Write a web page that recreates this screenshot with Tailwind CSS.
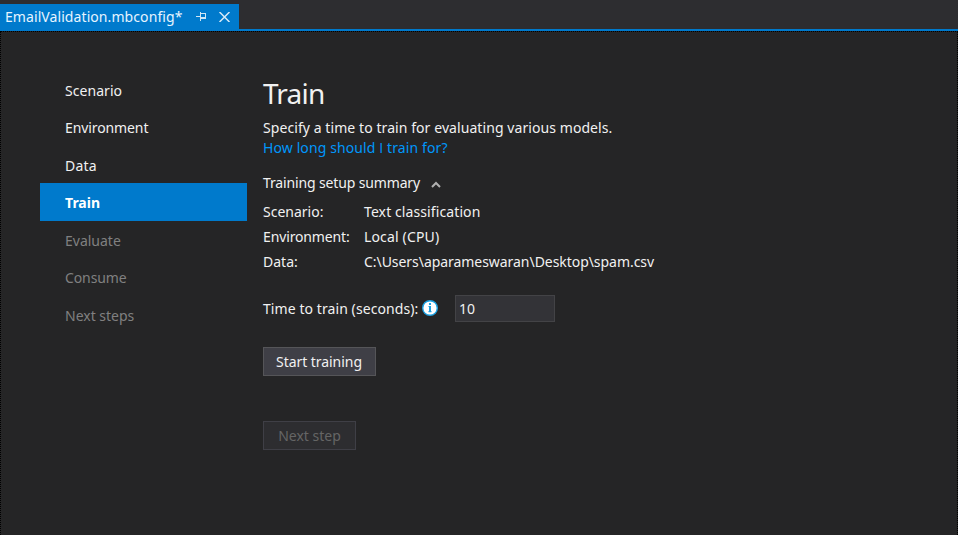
<!DOCTYPE html>
<html lang="en">
<head>
<meta charset="utf-8">
<title>EmailValidation.mbconfig</title>
<script src="https://cdn.jsdelivr.net/npm/@tailwindcss/browser@4"></script>
</head>
<body class="w-[958px] h-[535px] overflow-hidden flex flex-col bg-[#252526] text-[#f1f1f1] font-['Noto_Sans',sans-serif] text-[14px] leading-5 whitespace-nowrap">
<header class="h-[31px] shrink-0 bg-[#2d2d30] border-b-2 border-[#007acc] flex items-end">
  <div class="h-[25px] w-[239px] bg-[#007acc] flex items-center pl-[5px]">
    <span class="w-[191px] text-[#e6f4ff] pt-px tracking-[0.08px]">EmailValidation.mbconfig*</span>
    <svg class="w-[11px] h-[9px] shrink-0" viewBox="0 0 11 9" fill="#d0e6f5" shape-rendering="crispEdges"><path d="M0 4h4v1H0zM4 0h1v9H4zM5 1h5v1H5zM9 2h1v5H9zM5 5h5v2H5z"/></svg>
    <svg class="w-[11px] h-[10px] mt-px ml-[12px] shrink-0" viewBox="0 0 11 10" fill="none" stroke="#d8ebf8" stroke-width="1.500"><path d="M.5 0L10.500 10M10.500 0L.5 10"/></svg>
  </div>
</header>
<div class="flex-1 flex border-t border-x border-dotted border-black">
  <nav class="ml-[39px] mt-[38px] w-[207px] shrink-0">
    <div class="h-[37.5px] pl-[25px] pt-[4px] flex items-center tracking-[0.05px]">Scenario</div>
    <div class="h-[37.5px] pl-[25px] pt-[3px] flex items-center tracking-[-0.1px]">Environment</div>
    <div class="h-[37.5px] pl-[25px] pt-[4px] flex items-center tracking-[0.2px]">Data</div>
    <div class="h-[38px] pl-[25px] pt-[2px] flex items-center bg-[#007acc] text-white font-bold">Train</div>
    <div class="h-[37.5px] pl-[25px] pt-[3px] flex items-center text-[#808080]">Evaluate</div>
    <div class="h-[37.5px] pl-[25px] pt-[2px] flex items-center text-[#808080] tracking-[-0.1px]">Consume</div>
    <div class="h-[37.5px] pl-[25px] pt-[3px] flex items-center text-[#808080]">Next steps</div>
  </nav>
  <main class="ml-[16px] mt-[41px]">
    <h1 class="h-[45px] text-[28px] leading-[40px] tracking-[-0.8px]">Train</h1>
    <p class="h-5 tracking-[0.075px]">Specify a time to train for evaluating various models.</p>
    <p class="h-5 text-[#0097fb] tracking-[0.11px]">How long should <span class="font-['Open_Sans']">I</span> train for?</p>
    <div class="mt-[15px] h-5 flex"><span class="w-[157px] tracking-[-0.14px]">Training setup summary</span>
      <svg class="w-[10px] h-[7px] ml-[11px] mt-[8px]" viewBox="0 0 10 7" fill="none" stroke="#b0b0b0" stroke-width="2"><path d="M1 6L5 2L9 6"/></svg></div>
    <dl class="mt-[6px] grid grid-cols-[101px_auto] auto-rows-[25px] items-center">
      <dt>Scenario:</dt><dd class="tracking-[0.1px]">Text classification</dd>
      <dt class="tracking-[-0.13px]">Environment:</dt><dd class="tracking-[0.15px]">Local (CPU)</dd>
      <dt>Data:</dt><dd class="tracking-[-0.05px]">C:\Users\aparameswaran\Desktop\spam.csv</dd>
    </dl>
    <div class="mt-[21px] h-[27px] flex items-center">
      <span class="w-[159px] tracking-[0.08px]">Time to train (seconds):</span>
      <svg class="w-4 h-4 mb-[2px] shrink-0" viewBox="0 0 16 16"><circle cx="8" cy="8" r="7.300" fill="#fff" stroke="#1ba1e2" stroke-width="1.400"/><path d="M7 3h2v2H7zM6.500 6H9v5h.5v1.200H6.500V11H7V7H6.500z" fill="#1ba1e2"/></svg>
      <div class="ml-[17px] w-[100px] h-[27px] border border-[#434346] bg-[#333337] pl-[3px] flex items-center">10</div>
    </div>
    <button class="mt-[25px] w-[113px] h-[29px] border border-[#555558] bg-[#3f3f46] flex items-center justify-center tracking-[-0.05px] pr-px">Start training</button>
    <button class="mt-[45px] w-[93px] h-[29px] border border-[#3f3f46] bg-[#2d2d30] text-[#656565] flex items-center justify-center">Next step</button>
  </main>
</div>
</body>
</html>
